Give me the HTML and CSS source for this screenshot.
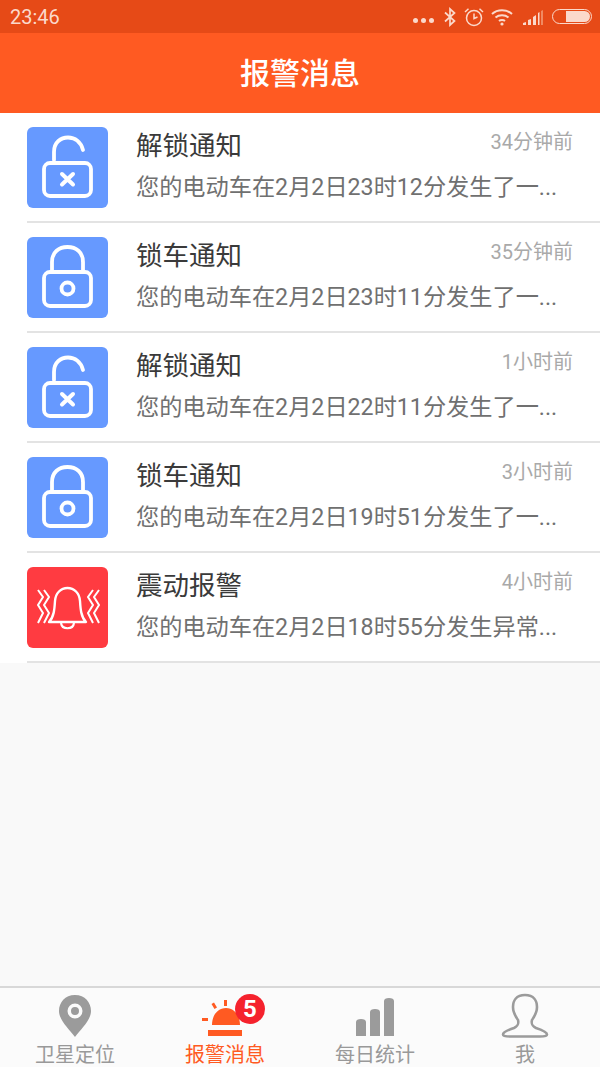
FILE: index.html
```html
<!DOCTYPE html>
<html lang="zh">
<head>
    <meta charset="UTF-8">
    <meta name="viewport" content="width=device-width, initial-scale=1.0">
    <title>报警消息</title>
    <link rel="stylesheet" href="styles.css">
</head>
<body>
    <svg class="defs">
        <defs>
            <symbol id="unlock" viewBox="0 0 81 81">
                <path d="M27 33V25C27 15 34 10.500 41 10.500S54 15 56 23" fill="none" stroke="#fff" stroke-width="3.800" stroke-linecap="round"/>
                <rect x="17" y="36" width="47" height="33" rx="6" fill="none" stroke="#fff" stroke-width="3.800"/>
                <path d="M35 47L46 57.500M46 47L35 57.500" fill="none" stroke="#fff" stroke-width="4" stroke-linecap="round"/>
            </symbol>
            <symbol id="lock" viewBox="0 0 81 81">
                <path d="M25 34V25C25 15 32 10 40.500 10S56 15 56 25V34" fill="none" stroke="#fff" stroke-width="3.800"/>
                <rect x="17" y="35" width="47" height="34" rx="6" fill="none" stroke="#fff" stroke-width="3.800"/>
                <circle cx="40.500" cy="51.500" r="6" fill="none" stroke="#fff" stroke-width="3.800"/>
            </symbol>
            <symbol id="bell" viewBox="0 0 81 81">
                <path d="M22 55C27 50 27.500 42 28 34C28.500 26 34 21 40.500 21S52.500 26 53 34C53.500 42 54 50 59 55Z" fill="none" stroke="#fff" stroke-width="2.400" stroke-linejoin="round"/>
                <path d="M34 56C35 63 46 63 47 56" fill="none" stroke="#fff" stroke-width="2.200"/>
                <path d="M11 23L16 30L11 38L16 46L11 56M17 23L22 30L17 38L22 46L17 56M72 23L67 30L72 38L67 46L72 56M66 23L61 30L66 38L61 46L66 56" fill="none" stroke="#fff" stroke-width="2"/>
            </symbol>
        </defs>
    </svg>

    <div class="app">
        <div class="status-bar">
            <span class="clock">23:46</span>
            <div class="status-icons">
                <span class="dots"><i></i><i></i><i></i></span>
                <svg width="14" height="20" viewBox="0 0 14 20"><path d="M2 5.500L11.500 14 7 18V2L11.500 6 2 14.500" fill="none" stroke="#fbd9cb" stroke-width="1.700"/></svg>
                <svg width="22" height="20" viewBox="0 0 22 20"><circle cx="11" cy="11" r="7.500" fill="none" stroke="#fbd9cb" stroke-width="1.500"/><path d="M11 6.500V11.500L14.500 10M2 5L5.500 1.800M20 5L16.500 1.800" fill="none" stroke="#fbd9cb" stroke-width="1.500"/></svg>
                <svg width="22" height="18" viewBox="0 0 22 18"><path d="M1 6C6.500 1 15.500 1 21 6M4.500 9.500C8 6.500 14 6.500 17.500 9.500M8 13C9.500 11.800 12.500 11.800 14 13" fill="none" stroke="#fbd9cb" stroke-width="2"/><circle cx="11" cy="16" r="1.600" fill="#fbd9cb"/></svg>
                <svg class="signal" width="21" height="16" viewBox="0 0 21 16"><path d="M0 16V14L3 13V16ZM5 16V11L8 10V16ZM10 16V8L13 6V16ZM15 16V4L16.500 3V16Z" fill="#fbd9cb"/><path d="M18 16V2L20 1V16Z" fill="#f08a62"/></svg>
                <span class="battery"><i></i></span>
            </div>
        </div>
        <header class="title-bar">报警消息</header>

        <ul class="msg-list">
            <li class="msg">
                <svg class="msg-icon blue"><use href="#unlock"/></svg>
                <div class="msg-body">
                    <div class="msg-top"><span class="msg-title">解锁通知</span><span class="msg-time">34分钟前</span></div>
                    <p class="msg-text">您的电动车在2月2日23时12分发生了一...</p>
                </div>
            </li>
            <li class="msg">
                <svg class="msg-icon blue"><use href="#lock"/></svg>
                <div class="msg-body">
                    <div class="msg-top"><span class="msg-title">锁车通知</span><span class="msg-time">35分钟前</span></div>
                    <p class="msg-text">您的电动车在2月2日23时11分发生了一...</p>
                </div>
            </li>
            <li class="msg">
                <svg class="msg-icon blue"><use href="#unlock"/></svg>
                <div class="msg-body">
                    <div class="msg-top"><span class="msg-title">解锁通知</span><span class="msg-time">1小时前</span></div>
                    <p class="msg-text">您的电动车在2月2日22时11分发生了一...</p>
                </div>
            </li>
            <li class="msg">
                <svg class="msg-icon blue"><use href="#lock"/></svg>
                <div class="msg-body">
                    <div class="msg-top"><span class="msg-title">锁车通知</span><span class="msg-time">3小时前</span></div>
                    <p class="msg-text">您的电动车在2月2日19时51分发生了一...</p>
                </div>
            </li>
            <li class="msg">
                <svg class="msg-icon red"><use href="#bell"/></svg>
                <div class="msg-body">
                    <div class="msg-top"><span class="msg-title">震动报警</span><span class="msg-time">4小时前</span></div>
                    <p class="msg-text">您的电动车在2月2日18时55分发生异常...</p>
                </div>
            </li>
        </ul>

        <div class="spacer"></div>

        <nav class="tab-bar">
            <div class="tab">
                <svg class="tab-icon" viewBox="0 0 50 50"><path fill-rule="evenodd" d="M25 2C15 2 9 9.500 9 18C9 27 19 36 25 44C31 36 41 27 41 18C41 9.500 35 2 25 2ZM25 10.500A7.500 7.500 0 1 1 25 25.500A7.500 7.500 0 1 1 25 10.500ZM25 14A4 4 0 1 0 25 22A4 4 0 1 0 25 14Z" fill="#9b9b9b"/></svg>
                <span>卫星定位</span>
            </div>
            <div class="tab active">
                <svg class="tab-icon" viewBox="0 0 50 50"><path d="M12 32C12 22 18 15 26 15S40 22 40 32ZM8 37H42V43H8ZM2 25H8V28H2ZM11.500 11L14 9.500 17 14.500 14.500 16ZM24 7H27V13H24Z" fill="#ff5a22"/></svg>
                <span>报警消息</span>
                <b class="badge">5</b>
            </div>
            <div class="tab">
                <svg class="tab-icon" viewBox="0 0 50 50"><path d="M6 29C6 27 8 26 11 26S16 27 16 29V43H6ZM20 19C20 17 22 16 25 16S30 17 30 19V43H20ZM34 8C34 6 36 5 39 5S44 6 44 8V43H34Z" fill="#9b9b9b"/></svg>
                <span>每日统计</span>
            </div>
            <div class="tab">
                <svg class="tab-icon" viewBox="0 0 50 50"><path d="M25 2C16 2 13 8 13 14C13 20 16 24 18 27C19 31 18 33 14 35C8 37 3 39 3 41.500C3 43 6 43.500 10 43.500H40C44 43.500 47 43 47 41.500C47 39 42 37 36 35C32 33 31 31 32 27C34 24 37 20 37 14C37 8 34 2 25 2Z" fill="none" stroke="#9b9b9b" stroke-width="2.600"/></svg>
                <span>我</span>
            </div>
        </nav>
    </div>
</body>
</html>
```

FILE: styles.css
```css
* {
    box-sizing: border-box;
}
html, body {
    margin: 0;
    height: 100%;
}
body {
    font-family: "Roboto", "Noto Sans CJK SC", sans-serif;
    background: #fafafa;
}
.defs {
    display: none;
}
.app {
    display: flex;
    flex-direction: column;
    height: 1067px;
    overflow: hidden;
}

/* status bar */
.status-bar {
    height: 33px;
    background: #e64a17;
    color: #fbd9cb;
    display: flex;
    align-items: center;
    justify-content: space-between;
    padding: 0 8px 0 10px;
    flex: none;
}
.clock {
    font-size: 20px;
}
.status-icons {
    display: flex;
    align-items: center;
    gap: 6px;
}
.status-icons svg {
    display: block;
}
.dots {
    display: flex;
    gap: 3px;
    margin-top: 8px;
    margin-right: 3px;
}
.dots i {
    width: 5px;
    height: 5px;
    border-radius: 50%;
    background: #fbd9cb;
}
.signal {
    margin-left: 4px;
}
.battery {
    width: 40px;
    height: 15px;
    border: 1.5px solid #fbd9cb;
    border-radius: 8px;
    padding: 1px;
    display: flex;
    justify-content: flex-end;
    margin-left: 2px;
}
.battery i {
    width: 24px;
    background: #fbd9cb;
    border-radius: 0 6px 6px 0;
}

/* title */
.title-bar {
    height: 80px;
    background: #ff5a22;
    color: #fff;
    font-size: 30px;
    font-weight: 500;
    line-height: 82px;
    text-align: center;
    flex: none;
}

/* list */
.msg-list {
    list-style: none;
    margin: 0;
    padding: 0;
    background: #fff;
    flex: none;
}
.msg {
    height: 110px;
    margin-left: 27px;
    border-bottom: 2px solid #e3e3e3;
    display: flex;
    align-items: flex-start;
    padding-top: 14px;
}
.msg-icon {
    width: 81px;
    height: 81px;
    border-radius: 6px;
    flex: none;
}
.msg-icon.blue {
    background: #6699ff;
}
.msg-icon.red {
    background: #ff3b41;
}
.msg-body {
    flex: 1;
    min-width: 0;
    margin-left: 28px;
    padding-right: 27px;
}
.msg-top {
    display: flex;
    justify-content: space-between;
    align-items: flex-start;
    height: 45px;
}
.msg-title {
    font-size: 26.500px;
    line-height: 38px;
    color: #3a3a3a;
}
.msg-time {
    font-size: 20px;
    line-height: 30px;
    color: #a9a9a9;
}
.msg-text {
    margin: 0;
    font-size: 23.200px;
    line-height: 30px;
    color: #707070;
    white-space: nowrap;
}

.spacer {
    flex: 1;
    background: #f9f9f9;
}

/* bottom tabs */
.tab-bar {
    height: 81px;
    background: #fbfbfb;
    border-top: 2px solid #d8d8d8;
    display: grid;
    grid-template-columns: repeat(4, 1fr);
    flex: none;
}
.tab {
    position: relative;
    display: flex;
    flex-direction: column;
    align-items: center;
    color: #999;
    font-size: 20px;
    line-height: 24px;
    padding-top: 5px;
}
.tab-icon {
    width: 50px;
    height: 50px;
}
.tab.active {
    color: #ff5a22;
}
.badge {
    position: absolute;
    left: 85px;
    top: 6px;
    width: 30px;
    height: 30px;
    border-radius: 50%;
    background: #f5222d;
    color: #fff;
    font-size: 24px;
    line-height: 30px;
    text-align: center;
}
```
